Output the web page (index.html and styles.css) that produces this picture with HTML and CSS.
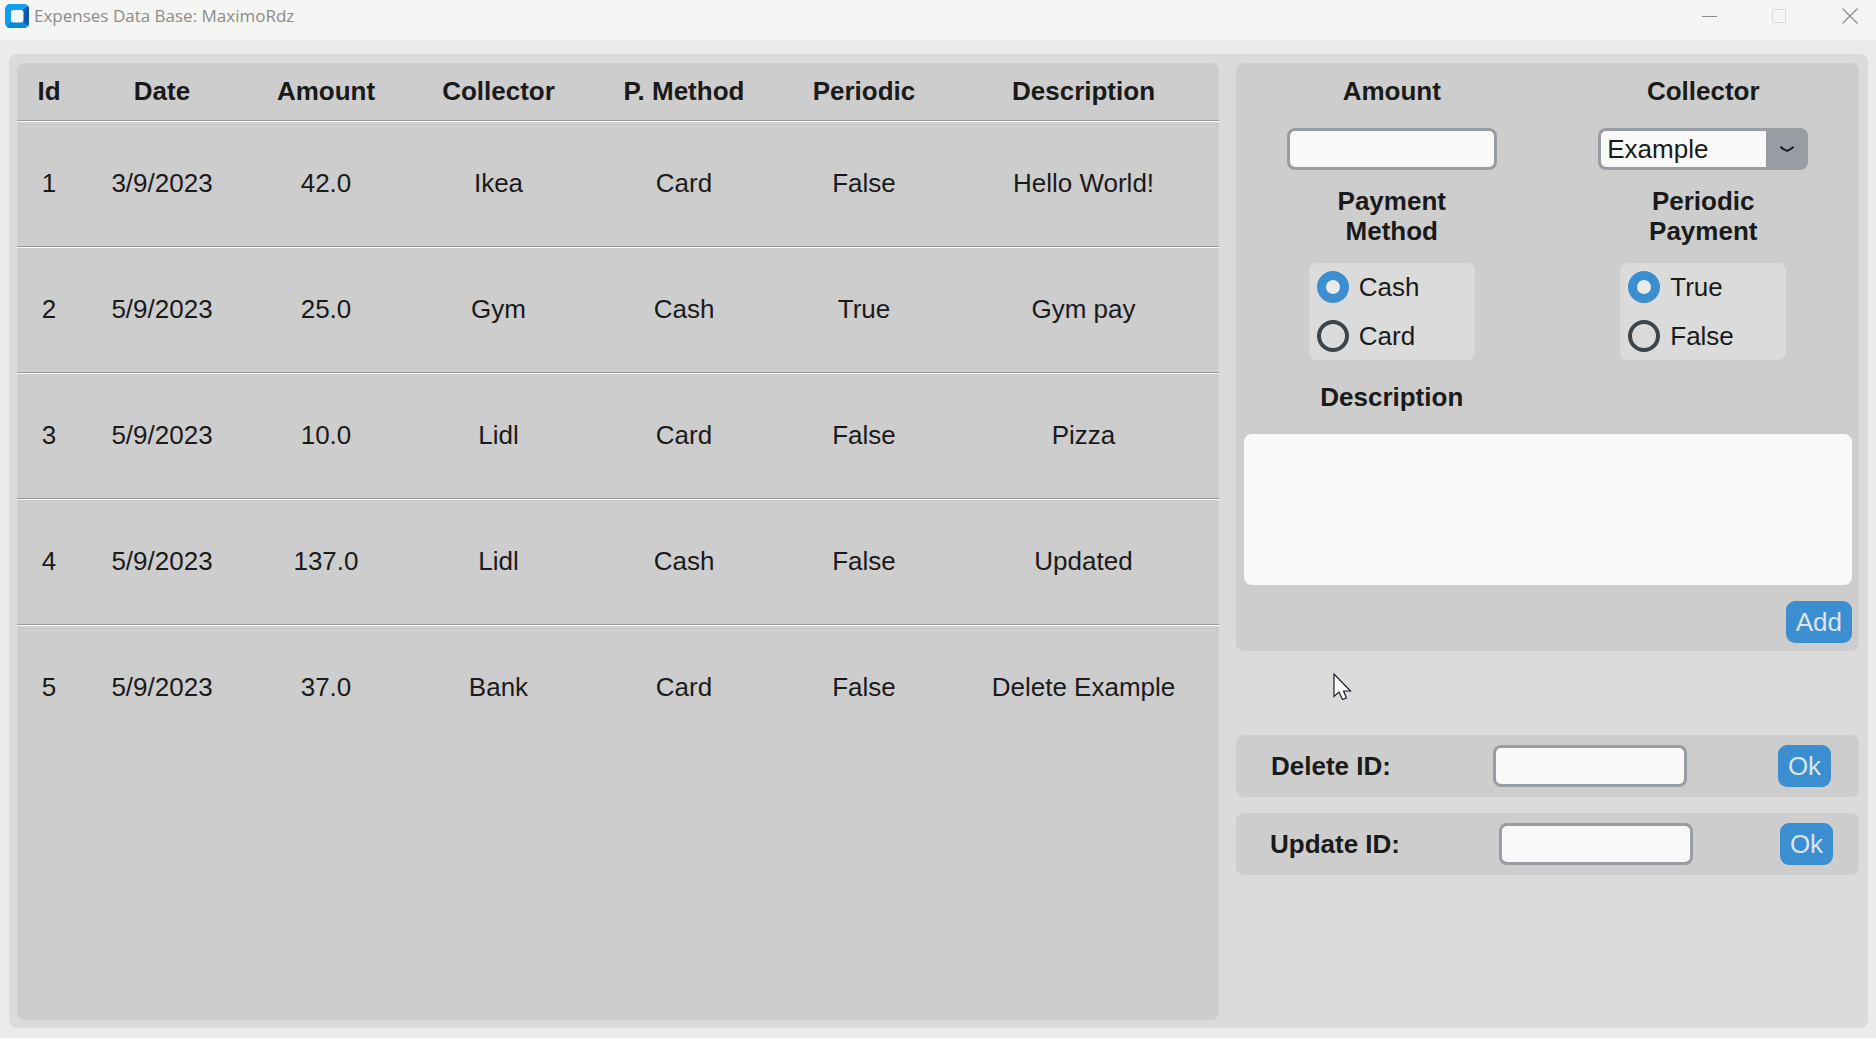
FILE: index.html
```html
<!DOCTYPE html>
<html lang="en">
<head>
<meta charset="utf-8">
<title>Expenses Data Base: MaximoRdz</title>
<link rel="stylesheet" href="styles.css">
</head>
<body>
<header class="titlebar">
  <svg class="app-icon" width="24" height="24" viewBox="0 0 24 24" aria-hidden="true">
    <rect width="24" height="24" rx="5" fill="#0d9ff0"/>
    <path d="M18 6L23 2Q24 3 24 5V19Q24 21 23 22L18 18Z" fill="#0a5aa8"/>
    <path d="M6 18H18L22 23Q21 24 19 24H5Q3 24 2 23Z" fill="#0e86d8"/>
    <rect x="6" y="6" width="12.500" height="12.500" rx="2.500" fill="#f8f8f6"/>
  </svg>
  <h1 class="app-title">Expenses Data Base: MaximoRdz</h1>
  <div class="window-controls">
    <button class="window-button" type="button" aria-label="Minimize">
      <svg width="16" height="16" viewBox="0 0 16 16"><path d="M0 8.500H15" stroke="#8c8c88"/></svg>
    </button>
    <button class="window-button" type="button" aria-label="Maximize" disabled>
      <svg width="16" height="16" viewBox="0 0 16 16"><rect x=".5" y="1.500" width="13" height="13" rx="1" fill="none" stroke="#d8d8d8"/></svg>
    </button>
    <button class="window-button" type="button" aria-label="Close">
      <svg width="16" height="16" viewBox="0 0 16 16"><path d="M.5.5L15.500 15.500M15.500.5L.5 15.500" stroke="#8c8c88" stroke-width="1.300"/></svg>
    </button>
  </div>
</header>

<main class="workspace">
  <div class="frame">
    <section class="panel records">
      <table class="expenses">
        <colgroup>
          <col class="col-id"><col class="col-date"><col class="col-amount"><col class="col-collector">
          <col class="col-method"><col class="col-periodic"><col class="col-description">
        </colgroup>
        <thead>
          <tr><th>Id</th><th>Date</th><th>Amount</th><th>Collector</th><th>P. Method</th><th>Periodic</th><th>Description</th></tr>
        </thead>
        <tbody>
          <tr><td>1</td><td>3/9/2023</td><td>42.0</td><td>Ikea</td><td>Card</td><td>False</td><td>Hello World!</td></tr>
          <tr><td>2</td><td>5/9/2023</td><td>25.0</td><td>Gym</td><td>Cash</td><td>True</td><td>Gym pay</td></tr>
          <tr><td>3</td><td>5/9/2023</td><td>10.0</td><td>Lidl</td><td>Card</td><td>False</td><td>Pizza</td></tr>
          <tr><td>4</td><td>5/9/2023</td><td>137.0</td><td>Lidl</td><td>Cash</td><td>False</td><td>Updated</td></tr>
          <tr><td>5</td><td>5/9/2023</td><td>37.0</td><td>Bank</td><td>Card</td><td>False</td><td>Delete Example</td></tr>
        </tbody>
      </table>
    </section>

    <aside class="sidebar">
      <form class="panel entry-form">
        <div class="field">
          <label class="heading" for="amount">Amount</label>
          <input class="text-box" id="amount" type="text">
        </div>
        <div class="field">
          <label class="heading" for="collector">Collector</label>
          <div class="combo">
            <select class="combo-select" id="collector"><option>Example</option></select>
            <svg class="combo-arrow" width="14" height="6" viewBox="0 0 14 6" aria-hidden="true"><path d="M.5.8L3.500 3.200L7 4.800L10.500 3.200L13.500.8" fill="none" stroke="#1a1a1a" stroke-width="2"/></svg>
          </div>
        </div>
        <div class="field choice" role="radiogroup" aria-labelledby="method-heading">
          <span class="heading" id="method-heading">Payment<br>Method</span>
          <div class="options">
            <label class="option"><input class="radio" type="radio" name="method" checked>Cash</label>
            <label class="option"><input class="radio" type="radio" name="method">Card</label>
          </div>
        </div>
        <div class="field choice" role="radiogroup" aria-labelledby="periodic-heading">
          <span class="heading" id="periodic-heading">Periodic<br>Payment</span>
          <div class="options">
            <label class="option"><input class="radio" type="radio" name="periodic" checked>True</label>
            <label class="option"><input class="radio" type="radio" name="periodic">False</label>
          </div>
        </div>
        <label class="heading description-heading" for="description">Description</label>
        <div class="description-row">
          <textarea class="description" id="description"></textarea>
          <button class="button" type="button">Add</button>
        </div>
      </form>

      <form class="panel id-form delete-form">
        <label class="heading" for="delete-id">Delete ID:</label>
        <input class="text-box id-box" id="delete-id" type="text">
        <button class="button" type="button">Ok</button>
      </form>
      <form class="panel id-form update-form">
        <label class="heading" for="update-id">Update ID:</label>
        <input class="text-box id-box" id="update-id" type="text">
        <button class="button" type="button">Ok</button>
      </form>

      <svg class="pointer" width="19" height="28" viewBox="0 0 19 28" aria-hidden="true">
        <path d="M1 1V23.500L6 19L9.500 26.500L13.500 25L10.500 18H17.500Z" fill="#fff" stroke="#1c1c2c" stroke-width="1.200"/>
      </svg>
    </aside>
  </div>
</main>
</body>
</html>
```
FILE: styles.css
```css
* {
  box-sizing: border-box;
}

body {
  margin: 0;
  min-height: 100vh;
  display: flex;
  flex-direction: column;
  background: #ebebeb;
  color: #1a1a1a;
  font: 26px/30px "Liberation Sans", Arial, sans-serif;
}

.titlebar {
  display: flex;
  align-items: center;
  height: 40px;
  padding: 0 18px 8px 5px;
  background: #f5f5f4;
}

.app-icon {
  flex: none;
}

.app-title {
  flex: 1;
  margin: 0 0 0 5px;
  color: #8c8c88;
  font: 17px/24px "Open Sans", "Noto Sans", sans-serif;
}

.window-controls {
  display: flex;
  gap: 54px;
}

.window-button {
  display: flex;
  padding: 0;
  border: 0;
  background: none;
}

.workspace {
  flex: 1;
  display: flex;
  padding: 14px 8px 10px 9px;
}

.frame {
  flex: 1;
  display: grid;
  grid-template-columns: 1202fr 623fr;
  gap: 17px;
  padding: 9px 9px 8px 8px;
  border-radius: 8px;
  background: #dbdbdb;
}

.panel {
  border-radius: 8px;
  background: #cdcdcd;
}

.expenses {
  width: 100%;
  table-layout: fixed;
  border-spacing: 0;
  text-align: center;
}

.expenses th,
.expenses td {
  padding: 0 0 2px;
  border-bottom: 1px solid #999;
}

.expenses th {
  height: 58px;
}

.expenses td {
  height: 126px;
  border-top: 1px solid #fafafa;
}

.expenses tbody tr:last-child td {
  border-bottom-color: transparent;
}

.col-id { width: 64px; }
.col-date { width: 162px; }
.col-amount { width: 166px; }
.col-collector { width: 179px; }
.col-method { width: 192px; }
.col-periodic { width: 168px; }
.col-description { width: 271px; }

.sidebar {
  position: relative;
  display: flex;
  flex-direction: column;
  gap: 16px;
}

.entry-form {
  display: grid;
  grid-template-columns: 1fr 1fr;
  justify-items: center;
  margin-bottom: 68px;
  padding: 13px 0 8px;
}

.heading {
  font-weight: bold;
  text-align: center;
}

.field {
  display: flex;
  flex-direction: column;
  align-items: center;
  gap: 22px;
}

.choice {
  gap: 17px;
  margin-top: 16px;
}

.text-box,
.combo-select {
  width: 210px;
  height: 42px;
  padding: 0 6px;
  border: 3px solid #979da2;
  border-radius: 8px;
  background: #f9f9fa;
  color: inherit;
  font: inherit;
}

.combo {
  position: relative;
  display: flex;
}

.combo-select {
  appearance: none;
  background: linear-gradient(to left, #979da2 39px, #f9f9fa 39px);
}

.combo-arrow {
  position: absolute;
  right: 14px;
  top: 18px;
  pointer-events: none;
}

.options {
  display: flex;
  flex-direction: column;
  gap: 17px;
  width: 166px;
  padding: 8px;
  border-radius: 8px;
  background: #dbdbdb;
}

.option {
  display: flex;
  align-items: center;
  gap: 10px;
  height: 32px;
}

.radio {
  appearance: none;
  width: 32px;
  height: 32px;
  margin: 0;
  border: 4px solid #3e454a;
  border-radius: 50%;
}

.radio:checked {
  border: 9px solid #3b8ed0;
  background: #ebebeb;
}

.description-heading {
  margin-top: 22px;
}

.description-row {
  grid-column: 1 / -1;
  justify-self: stretch;
  display: flex;
  flex-direction: column;
  align-items: flex-end;
  gap: 16px;
  padding: 22px 7px 0 8px;
}

.description {
  width: 100%;
  height: 151px;
  padding: 8px;
  border: 0;
  border-radius: 8px;
  background: #f9f9fa;
  font: inherit;
  resize: none;
}

.button {
  height: 42px;
  padding: 0 10px;
  border: 0;
  border-radius: 9px;
  background: #3b8ed0;
  color: #dce4ee;
  font: inherit;
}

.id-form {
  display: grid;
  align-items: center;
  justify-items: center;
  height: 62px;
  padding-right: 4px;
}

.delete-form {
  grid-template-columns: 190fr 328fr 101fr;
}

.update-form {
  grid-template-columns: 198fr 324fr 97fr;
}

.id-box {
  width: 194px;
}

.pointer {
  position: absolute;
  left: 97px;
  top: 610px;
}
```
